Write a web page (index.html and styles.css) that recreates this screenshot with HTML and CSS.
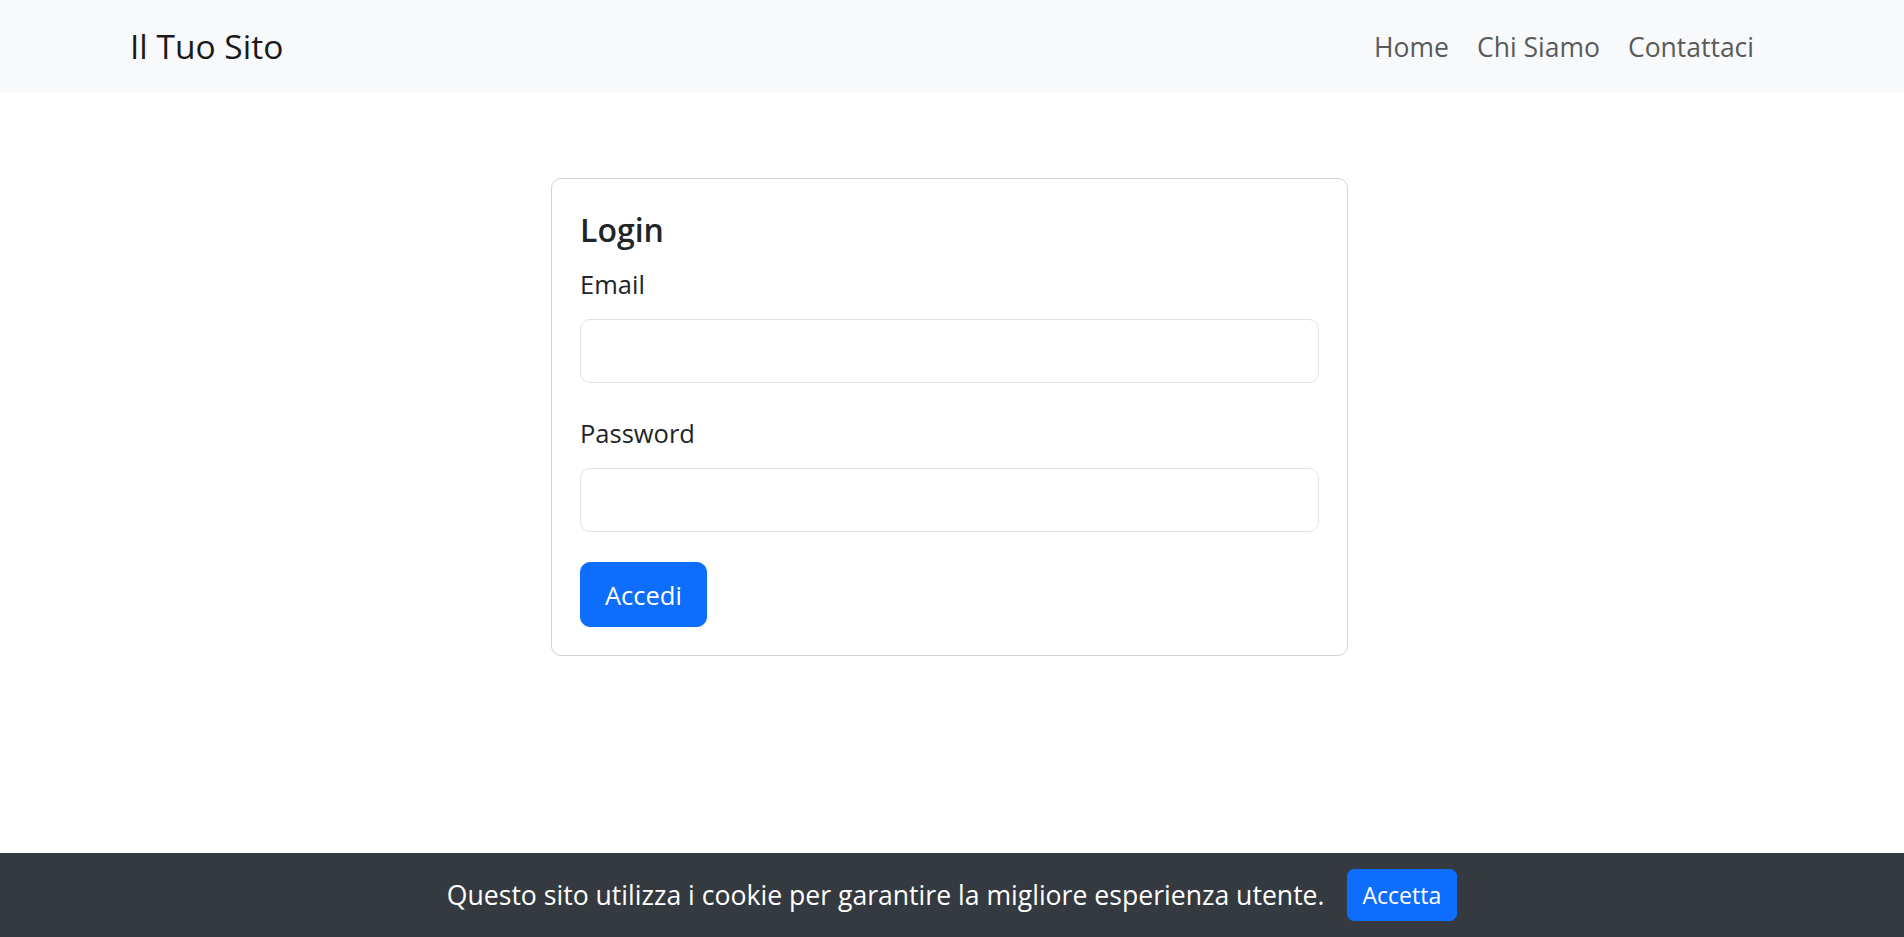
FILE: index.html
```html
<!DOCTYPE html>
<html lang="it">
<head>
<meta charset="utf-8">
<title>Il Tuo Sito</title>
<link rel="stylesheet" href="styles.css">
</head>
<body>
<nav class="navbar">
  <a class="brand" href="#">Il Tuo Sito</a>
  <ul class="nav-links">
    <li><a href="#">Home</a></li>
    <li><a href="#">Chi Siamo</a></li>
    <li><a href="#">Contattaci</a></li>
  </ul>
</nav>

<main class="main">
  <div class="card">
    <h5 class="card-title">Login</h5>
    <form class="login-form">
      <div class="group">
        <label class="label" for="email">Email</label>
        <input class="input" type="email" id="email">
      </div>
      <div class="group">
        <label class="label" for="password">Password</label>
        <input class="input" type="password" id="password">
      </div>
      <button type="button" class="btn">Accedi</button>
    </form>
  </div>
</main>

<div class="cookie-bar">
  <span class="cookie-text">Questo sito utilizza i cookie per garantire la migliore esperienza utente.</span>
  <button type="button" class="btn-sm">Accetta</button>
</div>
</body>
</html>
```

FILE: styles.css
```css
* { box-sizing: border-box; }

html, body {
  margin: 0;
  padding: 0;
}

body {
  font-family: "Open Sans", "Noto Sans", "Liberation Sans", sans-serif;
  font-size: 25.5px;
  color: #212529;
  background: #ffffff;
}

.navbar {
  height: 93px;
  background: #f8f9fa;
  display: flex;
  align-items: center;
  justify-content: space-between;
  padding: 0 136px 0 130px;
}

.brand {
  font-size: 33.5px;
  color: #1a1a1a;
  text-decoration: none;
  line-height: 1;
}

.nav-links {
  list-style: none;
  margin: 0;
  padding: 0;
  display: flex;
}

.nav-links a {
  display: block;
  padding: 0 14px;
  color: #595a5b;
  text-decoration: none;
  font-size: 26.5px;
}

.main {
  padding-top: 85px;
  padding-right: 5px;
  display: flex;
  justify-content: center;
}

.card {
  width: 797px;
  border: 1px solid #d2d3d4;
  border-radius: 10px;
  padding: 28px;
  background: #fff;
}

.card-title {
  margin: 0 0 11px 0;
  font-size: 32px;
  font-weight: 600;
  line-height: 46px;
  color: #212529;
}

.group {
  margin-bottom: 30px;
}

.label {
  display: block;
  line-height: 41px;
  margin-bottom: 14px;
}

.input {
  display: block;
  width: 100%;
  height: 64px;
  border: 1px solid #dee2e6;
  border-radius: 10px;
  background: #fff;
  font: inherit;
  padding: 0 20px;
}

.btn {
  height: 65px;
  padding: 0 24px;
  border: 1px solid #0d6efd;
  background: #0d6efd;
  color: #fff;
  border-radius: 10px;
  font: inherit;
  cursor: pointer;
}

.cookie-bar {
  position: fixed;
  left: 0;
  right: 0;
  bottom: 0;
  height: 84px;
  background: #343a40;
  color: #fff;
  display: flex;
  align-items: center;
  justify-content: center;
  gap: 22px;
}

.cookie-text {
  font-size: 26.6px;
}

.btn-sm {
  height: 52px;
  padding: 0 15px;
  border: 1px solid #0d6efd;
  background: #0d6efd;
  color: #fff;
  border-radius: 7px;
  font-family: inherit;
  font-size: 23px;
  cursor: pointer;
}
```
